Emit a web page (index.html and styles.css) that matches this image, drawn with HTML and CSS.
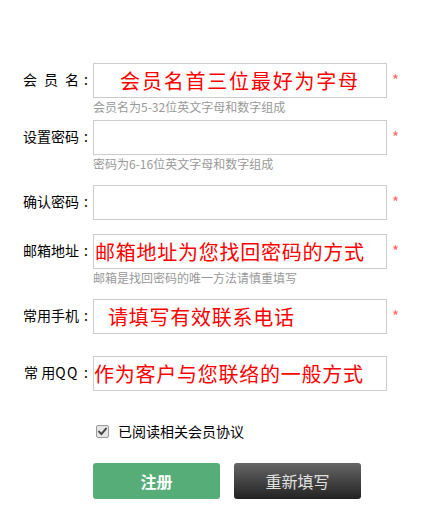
FILE: index.html
```html
<!DOCTYPE html>
<html lang="zh">
<head>
<meta charset="utf-8">
<title>注册</title>
<link rel="stylesheet" href="styles.css">
</head>
<body>
<form class="reg">
  <div class="row r1">
    <label class="lbl">会&ensp;员&ensp;名<span class="colon">:</span></label>
    <div class="field">
      <input class="inp center wide" type="text" value="会员名首三位最好为字母">
      <div class="hint">会员名为5-32位英文字母和数字组成</div>
    </div>
    <span class="star">*</span>
  </div>
  <div class="row r2">
    <label class="lbl">设置密码<span class="colon">:</span></label>
    <div class="field">
      <input class="inp" type="text" value="">
      <div class="hint">密码为6-16位英文字母和数字组成</div>
    </div>
    <span class="star">*</span>
  </div>
  <div class="row r3">
    <label class="lbl">确认密码<span class="colon">:</span></label>
    <div class="field">
      <input class="inp" type="text" value="">
    </div>
    <span class="star">*</span>
  </div>
  <div class="row r4">
    <label class="lbl">邮箱地址<span class="colon">:</span></label>
    <div class="field">
      <input class="inp pad1" type="text" value="邮箱地址为您找回密码的方式">
      <div class="hint">邮箱是找回密码的唯一方法请慎重填写</div>
    </div>
    <span class="star">*</span>
  </div>
  <div class="row r5">
    <label class="lbl">常用手机<span class="colon">:</span></label>
    <div class="field">
      <input class="inp pad14" type="text" value="请填写有效联系电话">
    </div>
    <span class="star">*</span>
  </div>
  <div class="row r6">
    <label class="lbl">常 用<span class="qq">QQ</span><span class="colon">:</span></label>
    <div class="field">
      <input class="inp" type="text" value="作为客户与您联络的一般方式">
    </div>
  </div>
  <div class="agree">
    <span class="chk" role="checkbox" aria-checked="true">
      <svg width="13" height="13" viewBox="0 0 13 13">
        <rect x="0.5" y="0.5" width="12" height="12" rx="1.5" fill="#e6e6e6" stroke="#9a9a9a"/>
        <path d="M3 6.6 L5.4 9.2 L10 3.6" fill="none" stroke="#444" stroke-width="1.9" stroke-linecap="round" stroke-linejoin="round"/>
      </svg>
    </span>
    <span>已阅读相关会员协议</span>
  </div>
  <div class="btns">
    <button type="button" class="btn btn-ok">注册</button>
    <button type="button" class="btn btn-reset">重新填写</button>
  </div>
</form>
</body>
</html>
```

FILE: styles.css
```css
html, body {
  margin: 0;
  padding: 0;
  background: #fff;
}
body {
  width: 438px;
  height: 531px;
  font-family: "Noto Sans CJK SC", "Noto Sans", sans-serif;
  color: #000;
}
.reg {
  padding-top: 63px;
}
.row {
  display: flex;
  align-items: flex-start;
}
.r2 { margin-top: 4px; }
.r3 { margin-top: 12px; }
.r4 { margin-top: 14px; }
.r5 { margin-top: 12px; }
.r6 { margin-top: 22px; }
.lbl {
  width: 93px;
  flex: none;
  text-align: right;
  font-size: 14px;
  line-height: 32px;
  height: 35px;
  color: #000;
  white-space: pre;
}
.colon {
  display: inline-block;
  width: 14px;
  text-align: center;
}
.qq {
  letter-spacing: 1.5px;
}
.field {
  width: 294px;
  flex: none;
}
.inp {
  display: block;
  box-sizing: border-box;
  width: 294px;
  height: 35px;
  margin: 0;
  border: 1px solid #ccc;
  padding: 0;
  font-family: "Noto Sans CJK SC", "Noto Sans", sans-serif;
  font-size: 20px;
  letter-spacing: 0.75px;
  color: #f00;
  background: #fff;
  outline: none;
}
.inp.center {
  text-align: center;
}
.inp.wide {
  letter-spacing: 1.8px;
}
.inp.pad1 { padding-left: 1px; }
.inp.pad14 { padding-left: 14px; }
.hint {
  font-size: 12px;
  line-height: 18px;
  color: #999;
  white-space: nowrap;
}
.star {
  margin-left: 5px;
  font-size: 15px;
  line-height: 33px;
  color: #f66;
}
.agree {
  display: flex;
  align-items: center;
  margin-top: 31px;
  padding-left: 96px;
  font-size: 14px;
  line-height: 18px;
  color: #000;
}
.chk {
  display: block;
  width: 13px;
  height: 13px;
  margin-right: 9px;
}
.chk svg {
  display: block;
}
.btns {
  display: flex;
  gap: 14px;
  margin-top: 23px;
  padding-left: 93px;
}
.btn {
  width: 127px;
  height: 36px;
  border: none;
  border-radius: 3px;
  padding: 0;
  font-family: "Noto Sans CJK SC", "Noto Sans", sans-serif;
  font-size: 16px;
  cursor: pointer;
}
.btn-ok {
  background: #56ad78;
  color: #fff;
  font-weight: bold;
}
.btn-reset {
  background: linear-gradient(#666, #222);
  color: #e0e0e0;
}
```
